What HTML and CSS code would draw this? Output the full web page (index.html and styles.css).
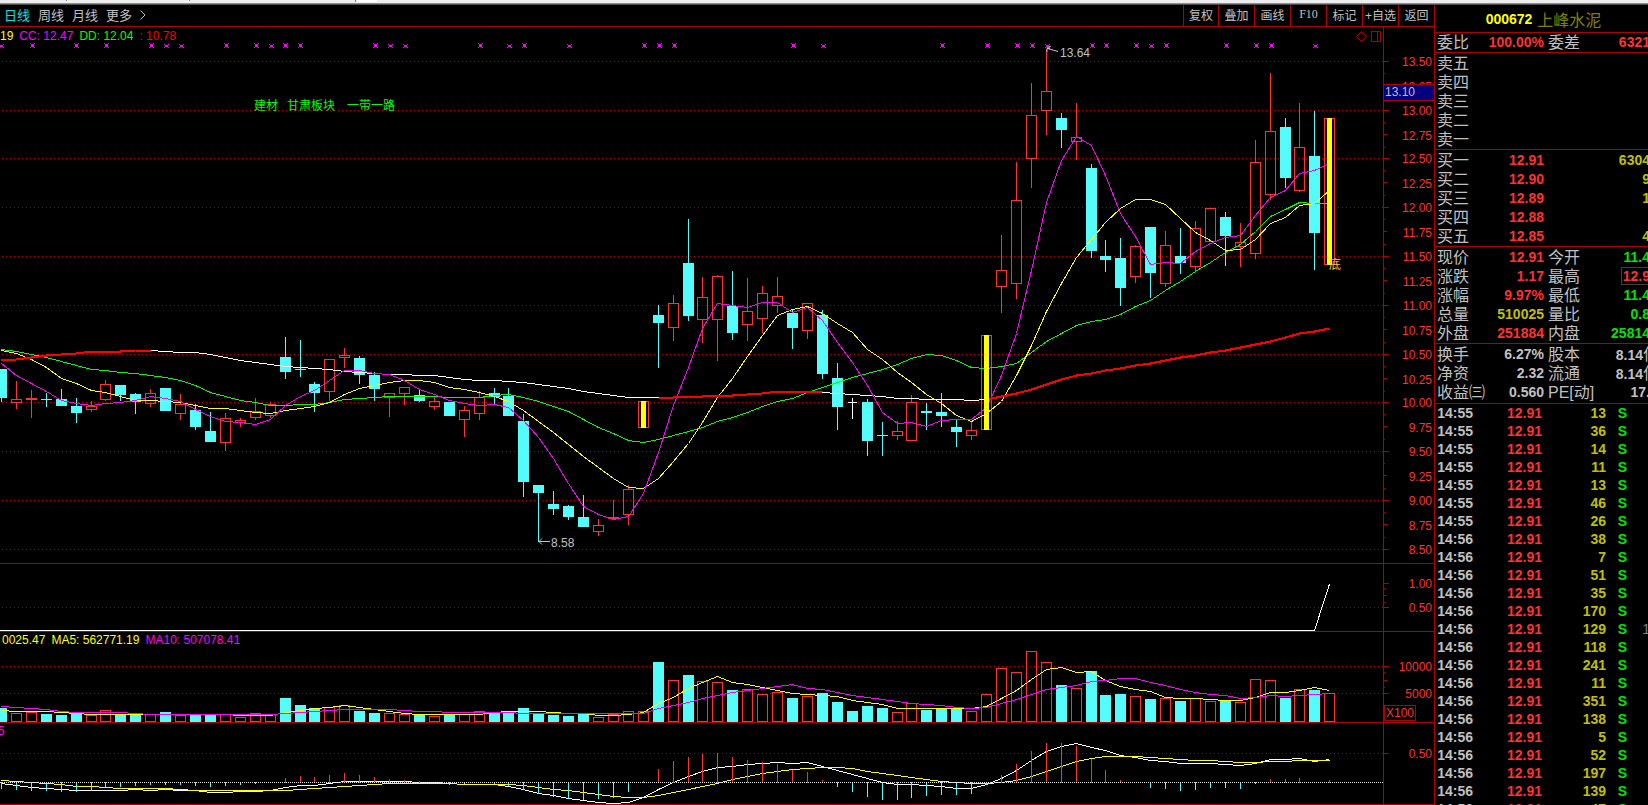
FILE: index.html
```html
<!DOCTYPE html>
<html lang="zh-CN">
<head>
<meta charset="utf-8">
<title>000672 上峰水泥</title>
<link rel="stylesheet" href="styles.css">
</head>
<body>
<div class="window-edge">
  <svg class="edge-marks" viewBox="0 0 400 3" aria-hidden="true">
    <rect x="66" y="0" width="1" height="1"/><rect x="189" y="0" width="1" height="1"/><rect x="355" y="0" width="1" height="2"/>
    <rect class="edge-notch" x="357" y="0" width="20" height="2"/>
  </svg>
</div>
<div class="terminal">
  <main class="charts">
    <header class="toolbar">
      <nav class="periods">
        <button class="period is-active" type="button">日线</button>
        <button class="period" type="button">周线</button>
        <button class="period" type="button">月线</button>
        <button class="period" type="button">更多</button>
        <svg class="more-arrow" viewBox="0 0 6 10" aria-hidden="true"><path d="M.5 .5L5 5L.5 9.5"/></svg>
      </nav>
      <div class="actions">
        <button type="button">复权</button>
        <button type="button">叠加</button>
        <button type="button">画线</button>
        <button type="button" class="latin">F10</button>
        <button type="button">标记</button>
        <button type="button">+自选</button>
        <button type="button">返回</button>
      </div>
    </header>

    <section class="panel panel-price">
      <p class="legend"><span class="yellow">19</span><span class="magenta">CC: 12.47</span><span class="green">DD: 12.04</span><span class="red">: 10.78</span></p>
      <svg class="plot" id="price-plot" viewBox="0 27 1383 536" preserveAspectRatio="xMinYMin meet"></svg>
      <svg class="axis" id="price-axis" viewBox="1384 27 50 536" preserveAspectRatio="xMinYMin meet"></svg>
    </section>
    <section class="panel panel-signal">
      <svg class="plot" id="signal-plot" viewBox="0 564 1383 67" preserveAspectRatio="xMinYMin meet"></svg>
      <svg class="axis" id="signal-axis" viewBox="1384 564 50 67" preserveAspectRatio="xMinYMin meet"></svg>
    </section>
    <section class="panel panel-volume">
      <p class="legend legend-volume"><span class="yellow">0025.47</span><span class="yellow">MA5: 562771.19</span><span class="magenta">MA10: 507078.41</span></p>
      <svg class="plot" id="volume-plot" viewBox="0 632 1383 90" preserveAspectRatio="xMinYMin meet"></svg>
      <svg class="axis" id="volume-axis" viewBox="1384 632 50 90" preserveAspectRatio="xMinYMin meet"></svg>
    </section>
    <section class="panel panel-macd">
      <p class="legend legend-macd"><span class="magenta">5</span></p>
      <svg class="plot" id="macd-plot" viewBox="0 723 1383 81" preserveAspectRatio="xMinYMin meet"></svg>
      <svg class="axis" id="macd-axis" viewBox="1384 723 50 81" preserveAspectRatio="xMinYMin meet"></svg>
    </section>
  </main>

  <aside class="quote">
    <h1 class="stock"><span class="code">000672</span><span class="name">上峰水泥</span></h1>
    <table class="grid">
      <tbody>
        <tr><th>委比</th><td class="up">100.00%</td><th>委差</th><td class="up">6321</td></tr>
      </tbody>
      <tbody class="five">
        <tr><th>卖五</th><td></td><th></th><td></td></tr>
        <tr><th>卖四</th><td></td><th></th><td></td></tr>
        <tr><th>卖三</th><td></td><th></th><td></td></tr>
        <tr><th>卖二</th><td></td><th></th><td></td></tr>
        <tr><th>卖一</th><td></td><th></th><td></td></tr>
      </tbody>
      <tbody class="five">
        <tr><th>买一</th><td class="up">12.91</td><th></th><td class="vol">6304</td></tr>
        <tr><th>买二</th><td class="up">12.90</td><th></th><td class="vol">9</td></tr>
        <tr><th>买三</th><td class="up">12.89</td><th></th><td class="vol">1</td></tr>
        <tr><th>买四</th><td class="up">12.88</td><th></th><td></td></tr>
        <tr><th>买五</th><td class="up">12.85</td><th></th><td class="vol">4</td></tr>
      </tbody>
      <tbody class="five">
        <tr><th>现价</th><td class="up">12.91</td><th>今开</th><td class="down">11.4</td></tr>
        <tr><th>涨跌</th><td class="up">1.17</td><th>最高</th><td class="up"><span class="boxed">12.9</span></td></tr>
        <tr><th>涨幅</th><td class="up">9.97%</td><th>最低</th><td class="down">11.4</td></tr>
        <tr><th>总量</th><td class="vol">510025</td><th>量比</th><td class="down">0.8</td></tr>
        <tr><th>外盘</th><td class="up">251884</td><th>内盘</th><td class="down">25814</td></tr>
      </tbody>
      <tbody class="three">
        <tr><th>换手</th><td>6.27%</td><th>股本</th><td class="wide">8.14<span class="unit">亿</span></td></tr>
        <tr><th>净资</th><td>2.32</td><th>流通</th><td class="wide">8.14<span class="unit">亿</span></td></tr>
        <tr><th>收益㈢</th><td>0.560</td><th>PE[动]</th><td>17.</td></tr>
      </tbody>
    </table>
    <table class="ticks"><tbody id="ticks"></tbody></table>
  </aside>
</div>
<script src="chart.js"></script>
</body>
</html>
```

FILE: styles.css
```css
* { box-sizing: border-box; }

body {
  margin: 0;
  height: 100vh;
  display: flex;
  flex-direction: column;
  overflow: hidden;
  background: #000;
  color: #c0c0c0;
  font-family: "Liberation Sans", "Noto Sans CJK SC", sans-serif;
  font-size: 12px;
}

button {
  padding: 0;
  border: 0;
  background: none;
  color: inherit;
  font: inherit;
  white-space: nowrap;
}

.window-edge {
  flex: none;
  height: 5px;
  background: #eee;
  border-bottom: 1px solid #505050;
  box-shadow: inset 0 -1px #8c8c8c;
}
.edge-marks { display: block; width: 400px; height: 3px; fill: #808080; shape-rendering: crispEdges; }
.edge-marks .edge-notch { fill: #fff; }

.terminal { flex: 1; min-height: 0; display: flex; }
.charts { flex: 1; min-width: 0; display: flex; flex-direction: column; }

.toolbar {
  flex: none;
  height: 22px;
  display: flex;
  justify-content: space-between;
  border-bottom: 1px solid #b00000;
}
.periods { display: flex; align-items: center; gap: 8px; padding: 0 0 2px 4px; font-size: 13px; }
.period.is-active { color: #00e6e6; }
.more-arrow { width: 6px; height: 10px; fill: none; stroke: #c0c0c0; }
.actions { display: flex; }
.actions button { width: 36px; padding-bottom: 2px; border-left: 1px solid #b00000; }
.actions button:first-child { width: 35px; }
.actions .latin { font-family: "Liberation Serif", serif; }

.panel {
  position: relative;
  min-height: 0;
  display: grid;
  grid-template-columns: 1fr 51px;
  border-bottom: 1px solid #b00000;
}
/* Shares exclude the 1px bottom rule of each panel. */
.panel-price { flex: 536 0 0; }
.panel-signal { flex: 67 0 0; }
.panel-volume { flex: 90 0 0; }
.panel-macd { flex: 81 0 0; }

.plot, .axis { display: block; width: 100%; height: 100%; min-width: 0; min-height: 0; }
.axis { border-left: 1px solid #b00000; }

.legend {
  position: absolute;
  top: 1px;
  left: 0;
  margin: 0;
  display: flex;
  gap: 6px;
  line-height: 16px;
  white-space: pre;
}
.legend-volume { top: 0; left: 2px; }
.legend-macd { top: 0; left: -2px; }

.yellow { color: #ff0; }
.magenta { color: #f0f; }
.green { color: #0f0; }
.red { color: #f00; }

.crisp { shape-rendering: crispEdges; }
.gridline { stroke: #b00000; stroke-dasharray: 1 3; }
.zero { stroke: #e0e0e0; stroke-dasharray: 1 1; }
.tick { stroke: #b00000; }
.frame { fill: none; stroke: #b00000; }
.rise { fill: none; stroke: #ff3232; }
.fall { fill: #54fcfc; stroke: none; }
.flat { fill: #fff; }
.hist-up { fill: #ff3232; }
.signal-bar { fill: #ff0; }
.marker { fill: #f0f; }
.line { fill: none; stroke-width: 1; }
.line-white { stroke: #fff; }
.line-yellow { stroke: #ff0; }
.line-magenta { stroke: #f0f; }
.line-green { stroke: #0f0; }
.line-trend { stroke: #f00; stroke-width: 2; }
.axis-label { fill: #ff3232; text-anchor: end; }
.unit-label { fill: #ff3232; }
.cursor-box { fill: #000080; }
.note { fill: #c0c0c0; }
.arrow { fill: none; stroke: #c0c0c0; }
.topic { fill: #0f0; }
.bottom-flag { fill: #ffc040; }

.quote {
  flex: none;
  width: 214px;
  overflow: hidden;
  border-left: 1px solid #b00000;
}
.stock {
  margin: 0;
  padding-left: 4px;
  height: 27px;
  display: flex;
  align-items: center;
  justify-content: center;
  gap: 5px;
  font-size: 14px;
}
.code { color: #ff0; }
.name { color: #808000; font-size: 16px; font-weight: 400; }

.grid, .ticks {
  width: 100%;
  table-layout: fixed;
  border-collapse: separate;
  border-spacing: 0;
  font-size: 14px;
  font-weight: 700;
  white-space: nowrap;
}
.grid { display: block; }
.grid tbody { display: block; border-top: 1px solid #b00000; }
.grid .five { padding-top: 1px; }
.grid .three { padding: 1px 0; border-bottom: 1px solid #b00000; }
.grid tr {
  display: grid;
  grid-template-columns: 50px 59px 47px 1fr;
  height: 19px;
  line-height: 19px;
}
.grid th {
  padding: 0 0 0 2px;
  text-align: left;
  font-size: 16px;
  font-weight: 400;
}
.grid th + td { text-align: right; }
.grid td { padding: 0; }
.grid td + th { padding-left: 4px; }
.grid td:last-child { margin-right: -2px; }
.grid td.wide { margin-right: -11px; }
.unit { font-size: 16px; font-weight: 400; }
.boxed { display: inline-block; padding-left: 1px; height: 18px; line-height: 17px; border: 1px solid #404040; border-right: 0; }

.up { color: #ff3232; }
.down { color: #00e600; }
.vol { color: #c0c000; }

.ticks tr { height: 18px; }
.ticks td { padding: 0; line-height: 18px; text-align: right; }
.ticks td:nth-child(1) { width: 38px; }
.ticks td:nth-child(2) { width: 69px; }
.ticks td:nth-child(3) { width: 64px; }
.ticks td:nth-child(4) { width: 21px; }
.ticks .count { color: #808080; font-weight: 400; }
.count span { margin-right: -2px; }
```

FILE: chart.js
```js
const NS = "http://www.w3.org/2000/svg";
const barX = i => Math.round(1 + 14.925 * i);

function add(parent, tag, attrs, text) {
  const node = document.createElementNS(NS, tag);
  for (const key in attrs) node.setAttribute(key, attrs[key]);
  if (text !== undefined) node.textContent = text;
  parent.appendChild(node);
  return node;
}
const byId = id => document.getElementById(id);
const gridline = (svg, y) => add(svg, "line", { class: "gridline crisp", x1: 2, x2: 1383, y1: y + 0.5, y2: y + 0.5 });
const tick = (svg, y, len) => add(svg, "line", { class: "tick crisp", x1: 1384, x2: 1384 + len, y1: y + 0.5, y2: y + 0.5 });
const label = (svg, y, text) => add(svg, "text", { class: "axis-label", x: 1432, y: y + 5 }, text);
function line(svg, cls, ys, start = 0) {
  const points = ys.map((y, k) => `${barX(start + k) + 0.5},${y + 0.5}`).join(" ");
  add(svg, "polyline", { class: `line crisp ${cls}`, points });
}

/* kind, high, body top, body bottom, low: U rise, D fall, W unchanged, Y limit-up */
const candles = `D369,369,398,402 U381,399,402,409 U390,398,399,418 D393,399,400,407 D389,399,406,406 D398,406,413,423 U401,406,409,412 U380,384,399,401 D385,385,395,401 D393,394,402,414
U389,393,403,407 D388,388,411,411 U394,404,413,420 D404,410,427,430 D412,431,442,442 U413,418,442,451 U418,420,422,427 U398,411,417,420 U402,404,415,418 D337,357,372,379
D340,369,370,377 D382,384,393,412 U359,359,391,401 U348,355,357,368 D356,358,375,384 D372,375,389,401 U393,393,397,417 U387,387,393,405 D390,395,401,402 U396,401,406,410
D402,402,416,416 U406,410,419,437 U391,397,413,420 D388,393,397,404 D388,396,416,416 D414,421,482,497 D485,485,493,542 D491,504,509,515 D505,506,517,520 D495,517,527,527
U519,525,531,536 U500,517,518,519 U485,489,514,525 Y401,401,427,427 D305,315,323,368 U295,303,327,341 D219,263,316,321 U277,297,319,343 U275,276,319,361 D271,306,333,340
U278,311,324,341 U286,293,318,333 U277,296,305,313 D309,313,328,349 U303,303,330,339 D310,315,374,379 D363,378,407,430 W398,402,403,419 D399,402,441,456 D422,435,436,456
U421,431,435,440 U395,402,440,441 D403,411,413,430 D393,412,416,427 D420,427,432,447 U421,430,435,440 Y335,335,429,430 U235,270,286,313 U162,200,283,299 U83,115,158,188
U49,91,110,135 D113,118,130,148 U103,137,141,160 D164,168,251,258 D240,256,260,272 D238,258,288,306 U245,246,276,283 D227,227,273,298 U231,245,283,287 D228,256,263,274
U221,228,266,272 U208,208,241,242 D212,217,236,266 U223,242,246,267 U140,162,253,259 U73,131,194,200 D118,127,178,188 U103,147,190,192 D111,156,233,270 Y118,118,264,265`
  .split(/\s+/).map(s => [s[0], ...s.slice(1).split(",").map(Number)]);

const ma5 = [363,375,383,391,400,403,405,403,402,400,396,398,401,409,416,421,422,424,419,405,396,390,380,370,370,373,374,380,389,394,400,403,405,404,407,420,437,458,483,506,514,519,516,493,452,405,367,328,303,305,307,302,302,312,307,320,342,362,385,412,423,422,426,420,419,419,407,375,333,270,202,160,136,145,175,213,236,264,262,263,251,243,237,235,215,197,190,173,170,163];
const ma10 = [350,353,359,367,378,383,390,392,396,400,400,401,402,405,408,408,410,412,413,410,408,406,402,394,388,385,382,380,380,382,387,389,392,396,401,410,421,432,444,456,467,478,487,488,478,461,443,422,397,378,356,335,315,309,306,313,323,332,349,359,372,382,394,403,415,421,413,401,375,345,311,283,257,239,222,208,199,199,204,218,232,240,250,249,239,223,217,205,203,190];
const ma20 = [349,351,354,357,361,365,369,370,372,373,375,377,380,385,392,396,400,402,405,405,404,404,402,399,398,397,396,396,396,396,397,397,397,395,394,397,401,406,411,419,427,433,440,442,439,435,431,427,421,417,412,406,401,398,392,387,382,377,373,369,364,358,354,355,360,367,368,366,363,352,341,333,325,321,319,314,306,300,290,281,271,262,252,244,231,216,209,202,203,203];
const trend = [360,359,357,355,354,353,351,351,351,350,350,351,352,352,354,357,360,362,364,366,367,368,369,371,372,373,374,374,375,375,377,379,380,380,381,382,384,386,388,391,393,395,397,397,397,397,396,396,395,395,394,393,391,391,391,392,393,394,395,396,398,398,399,399,399,400,399,396,393,389,384,379,375,373,370,368,365,363,360,357,355,352,350,347,344,341,337,333,331,328];

const volTop = [708,713,712,714,715,714,715,710,714,714,714,712,715,714,714,714,717,713,714,698,705,708,707,705,711,713,713,714,714,716,714,714,711,712,713,708,713,715,716,714,717,714,711,711,662,680,675,681,682,690,689,694,692,698,696,693,702,711,706,708,712,703,710,708,708,711,694,668,672,651,662,685,688,671,695,694,696,699,698,701,698,701,700,702,679,680,698,689,690,693];
const volMa5 = [710,711,711,711,712,713,714,714,714,714,714,714,714,714,714,714,715,715,715,712,710,708,707,705,707,709,711,713,714,714,714,714,714,712,711,711,711,712,713,713,715,715,714,712,703,697,688,682,676,682,684,687,690,693,694,695,696,700,702,704,708,708,708,708,708,708,706,698,690,679,669,667,672,671,680,686,689,691,697,698,698,699,700,700,697,692,692,690,687,690];
const volMa10 = [706,707,708,709,711,712,712,712,712,713,714,714,714,714,714,714,714,714,714,713,712,711,710,709,709,709,709,710,711,711,712,712,712,712,712,713,713,713,713,713,713,713,713,713,708,705,702,698,695,692,690,688,686,684,688,689,692,695,697,699,701,703,704,705,707,708,707,703,699,694,689,687,685,681,680,678,678,682,685,689,692,694,695,698,697,695,696,695,694,693];

const hist = [788,789,790,790,791,791,790,787,786,785,784,784,784,785,786,785,784,783,782,778,776,777,775,773,775,777,779,780,781,782,784,783,782,783,785,789,793,796,798,799,798,797,791,781,769,761,757,754,753,757,760,762,764,770,772,780,786,791,796,799,799,797,795,794,794,793,784,775,764,751,743,743,746,759,770,780,782,787,788,790,789,787,787,788,783,779,779,778,782,780];
const dif = [783,785,787,788,789,790,790,790,790,789,790,789,790,790,792,792,791,791,790,787,785,785,783,781,781,781,781,781,782,782,783,784,784,784,786,789,793,795,798,800,802,803,802,797,789,782,776,771,767,766,764,763,762,763,762,766,770,774,778,782,784,784,785,786,788,788,784,778,770,760,751,746,743,747,750,755,757,760,761,763,763,763,764,765,763,759,759,758,761,759];
const dea = [780,781,782,783,784,786,786,787,788,788,788,788,789,790,790,790,790,790,790,790,789,788,787,786,785,784,783,783,783,783,783,784,784,784,784,785,787,789,790,792,794,796,797,797,795,792,789,786,783,779,776,773,771,769,768,767,767,768,771,773,775,777,779,781,782,783,783,782,780,776,771,766,761,758,756,756,756,757,758,759,760,760,761,762,762,761,761,760,760,760];

/* Price panel */
const price = byId("price-plot");
const priceAxis = byId("price-axis");
const rows = [61, 110, 158, 207, 256, 305, 354, 402, 451, 500, 549];
rows.forEach((y, k) => {
  gridline(price, y);
  tick(priceAxis, y, 5);
  label(priceAxis, y, (13.5 - k / 2).toFixed(2));
  if (k < rows.length - 1) {
    tick(priceAxis, y + 12, 1);
    tick(priceAxis, y + 24, 3);
    tick(priceAxis, y + 37, 1);
    label(priceAxis, y + 25, (13.25 - k / 2).toFixed(2));
  }
});
add(priceAxis, "rect", { class: "cursor-box crisp", x: 1384, y: 85, width: 50, height: 15 });
[84, 100].forEach(y => tick(priceAxis, y, 50));
add(priceAxis, "text", { class: "note", x: 1385, y: 96 }, "13.10");

[[254, "建材"], [287, "甘肃板块"], [347, "一带一路"]].forEach(([x, t]) => add(price, "text", { class: "topic", x, y: 110 }, t));

const big = [32,76,106,151,226,256,285,300,375,480,524,644,659,674,793,942,987,1017,1032,1092,1106,1136,1166,1226,1256,1271];
const small = [1,166,181,271,390,405,509,569,823,1047,1151,1315];
const corners = (x, top, bottom) => `M${x - 2} ${top}h1v1h-1zM${x + 2} ${top}h1v1h-1zM${x - 2} ${bottom}h1v1h-1zM${x + 2} ${bottom}h1v1h-1z`;
big.forEach(x => add(price, "path", { class: "marker crisp", d: corners(x, 43, 47) + `M${x - 1} 44h3v3h-3z` }));
small.forEach(x => add(price, "path", { class: "marker crisp", d: corners(x, 44, 47) + `M${x - 1} 45h3v1h-3zM${x - 1} 46h3v1h-3z` }));

candles.forEach(([kind, high, top, bottom, low], i) => {
  const x = barX(i);
  if (kind === "D" || kind === "W") {
    const cls = (kind === "D" ? "fall" : "flat") + " crisp";
    const half = kind === "D" ? 5 : 4;
    add(price, "rect", { class: cls, x, y: high, width: 1, height: low - high });
    add(price, "rect", { class: cls, x: x - half, y: top, width: half * 2 + 1, height: bottom - top });
  } else {
    const c = x + 0.5;
    add(price, "path", { class: "rise crisp", d: `M${c} ${high}V${top}M${c} ${bottom + 1}V${Math.max(low, bottom + 1)}M${c - 5} ${top + 0.5}h10V${bottom + 0.5}h-10z` });
  }
});

line(price, "line-white", trend);
line(price, "line-green", ma20);
line(price, "line-yellow", ma10);
line(price, "line-magenta", ma5);
[[0, 11], [44, 56], [66, 90]].forEach(([a, b]) => line(price, "line-trend", trend.slice(a, b), a));
candles.forEach(([kind, , top, bottom], i) => {
  if (kind === "Y") add(price, "rect", { class: "signal-bar crisp", x: barX(i) - 2, y: top, width: 5, height: bottom - top + 1 });
});

add(price, "path", { class: "arrow", d: "M1047.5 48.5L1058 51.5M1047 52V48.500H1050M1047 48L1051 46" });
add(price, "text", { class: "note", x: 1060, y: 57 }, "13.64");
add(price, "path", { class: "arrow", d: "M539 541.500H550M542 538.500L539 541.500L542 544.500" });
add(price, "text", { class: "note", x: 551, y: 547 }, "8.58");
add(price, "text", { class: "bottom-flag", x: 1329, y: 269 }, "底");
add(price, "path", { class: "frame", d: "M1361.500 31.500L1366.500 36.500L1361.500 41.500L1356.500 36.500Z" });
add(price, "path", { class: "frame crisp", d: "M1371.500 31.500H1380.500V41.500H1371.500ZM1377.500 31.500V41.500" });

/* Signal panel */
const signal = byId("signal-plot");
const signalAxis = byId("signal-axis");
gridline(signal, 607);
add(signal, "polyline", { class: "line line-white crisp", points: "0,630.5 1314.5,630.5 1329.5,584" });
[[583, "1.00"], [607, "0.50"]].forEach(([y, t]) => { tick(signalAxis, y, 5); label(signalAxis, y, t); });
[[588, 1], [595, 3], [602, 1]].forEach(([y, n]) => tick(signalAxis, y, n));

/* Volume panel */
const volume = byId("volume-plot");
const volumeAxis = byId("volume-axis");
[[666, "10000"], [693, "5000"]].forEach(([y, t]) => { gridline(volume, y); tick(volumeAxis, y, 5); label(volumeAxis, y, t); });
[[672, 1], [680, 3], [687, 1]].forEach(([y, n]) => tick(volumeAxis, y, n));
volTop.forEach((y, i) => {
  const x = barX(i);
  if (candles[i][0] === "D" || candles[i][0] === "W") {
    add(volume, "rect", { class: "fall crisp", x: x - 5, y, width: 11, height: 722 - y });
  } else {
    add(volume, "rect", { class: "rise crisp", x: x - 4.5, y: y + 0.5, width: 10, height: 721 - y });
  }
});
line(volume, "line-yellow", volMa5);
line(volume, "line-magenta", volMa10);
add(volumeAxis, "rect", { class: "frame crisp", x: 1384.5, y: 705.5, width: 31, height: 15 });
add(volumeAxis, "text", { class: "unit-label", x: 1386, y: 717 }, "X100");

/* MACD panel */
const macd = byId("macd-plot");
const macdAxis = byId("macd-axis");
gridline(macd, 753);
tick(macdAxis, 753, 5);
label(macdAxis, 753, "0.50");
line(macd, "line-white", dif);
line(macd, "line-yellow", dea);
hist.forEach((y, i) => {
  if (y === 782) return;
  const cls = y > 782 ? "fall" : "hist-up";
  add(macd, "rect", { class: `${cls} crisp`, x: barX(i), y: Math.min(y, 782), width: 1, height: Math.abs(y - 782) + 1 });
});
add(macd, "line", { class: "zero crisp", x1: 0, x2: 1383, y1: 782.5, y2: 782.5 });

/* Trade ticks */
const trades = [13, 36, 14, 11, 13, 46, 26, 38, 7, 51, 35, 170, 129, 118, 241, 11, 351, 138, 5, 52, 197, 139, 47];
byId("ticks").innerHTML = trades.map((n, i) =>
  `<tr><td>14:${i < 7 ? 55 : 56}</td><td class="up">12.91</td><td class="vol">${n}</td><td class="down">S</td><td class="count">${i === 12 ? "<span>1</span>" : ""}</td></tr>`
).join("");
```
